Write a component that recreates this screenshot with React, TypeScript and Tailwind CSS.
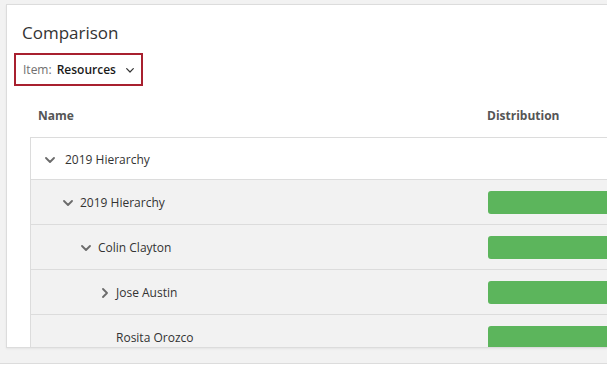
import { Fragment } from "react";

interface RowData {
  label: string;
  indent: number;
  box: number;
  chevron: "down" | "right" | null;
  bar: boolean;
  height: string;
  bg: string;
}

const rows: RowData[] = [
  { label: "2019 Hierarchy", indent: 14, box: 20, chevron: "down", bar: false, height: "h-[42px]", bg: "bg-white" },
  { label: "2019 Hierarchy", indent: 32, box: 17, chevron: "down", bar: true, height: "h-[45px]", bg: "bg-[#f2f2f2]" },
  { label: "Colin Clayton", indent: 50, box: 17, chevron: "down", bar: true, height: "h-[45px]", bg: "bg-[#f2f2f2]" },
  { label: "Jose Austin", indent: 71, box: 14, chevron: "right", bar: true, height: "h-[45px]", bg: "bg-[#f2f2f2]" },
  { label: "Rosita Orozco", indent: 85, box: 0, chevron: null, bar: true, height: "h-[45px]", bg: "bg-[#f2f2f2]" },
];

const ChevronDown = () => (
  <svg width="10" height="6" viewBox="0 0 10 6" fill="none">
    <path d="M1 1 L5 5 L9 1" stroke="#6b6b6b" strokeWidth="1.8" strokeLinecap="round" strokeLinejoin="round" />
  </svg>
);

const ChevronRight = () => (
  <svg width="6" height="10" viewBox="0 0 6 10" fill="none">
    <path d="M1 1 L5 5 L1 9" stroke="#6b6b6b" strokeWidth="1.8" strokeLinecap="round" strokeLinejoin="round" />
  </svg>
);

const App = () => {
  return (
    <div
      className="w-[607px] h-[370px] overflow-hidden flex flex-col bg-white"
      style={{ fontFamily: '"Open Sans", "Liberation Sans", sans-serif' }}
    >
      <div className="h-[363px] shrink-0 bg-[#f2f2f2] pt-[4px] pl-[6px] pb-[15px] flex flex-col">
        {/* Card */}
        <div className="flex-1 min-h-0 bg-white border border-r-0 border-[#dcdcdc] shadow-[0_1px_2px_rgba(0,0,0,0.06)] overflow-hidden flex flex-col">
          <h1 className="shrink-0 pl-[15px] pt-[16px] text-[17px] leading-6 text-[#333]">Comparison</h1>

          {/* Item dropdown */}
          <div className="shrink-0 ml-[7px] mt-[8px] w-[129px] h-[33px] border-2 border-[#a8202f] flex items-center pl-[7px] text-[12px] leading-4">
            <span className="text-[#707070]">Item:</span>
            <span className="ml-[5px] font-semibold text-[#1a1a1a]">Resources</span>
            <span className="ml-[10px] mt-[1px]">
              <svg width="8" height="5" viewBox="0 0 8 5" fill="none">
                <path d="M0.7 0.7 L4 4 L7.3 0.7" stroke="#333" strokeWidth="1.2" strokeLinecap="round" strokeLinejoin="round" />
              </svg>
            </span>
          </div>

          {/* Table */}
          <div className="shrink-0 ml-[23px] flex flex-col">
            <div className="flex pt-[22px] pb-[13px] text-[12px] leading-4 font-bold text-[#555]">
              <div className="w-[457px] shrink-0 pl-[8px]">Name</div>
              <div className="flex-1">Distribution</div>
            </div>
            <div className="border-t border-l border-[#dcdcdc] flex flex-col">
              {rows.map((r, i) => (
                <Fragment key={i}>
                  <div className={`shrink-0 flex items-center border-b border-[#dcdcdc] ${r.height} ${r.bg}`}>
                    <div
                      className="w-[457px] shrink-0 flex items-center pt-[2px] text-[12px] leading-4 text-[#333]"
                      style={{ paddingLeft: r.indent }}
                    >
                      {r.chevron && (
                        <span className="flex items-center shrink-0" style={{ width: r.box }}>
                          {r.chevron === "down" ? <ChevronDown /> : <ChevronRight />}
                        </span>
                      )}
                      <span>{r.label}</span>
                    </div>
                    <div className="flex-1">
                      {r.bar && <div className="h-[23px] w-[200px] rounded-[3px] bg-[#5cb55c]" />}
                    </div>
                  </div>
                </Fragment>
              ))}
            </div>
          </div>
        </div>
      </div>
      <div className="flex-1 border-t border-[#dcdcdc] bg-white" />
    </div>
  );
};

export default App;
